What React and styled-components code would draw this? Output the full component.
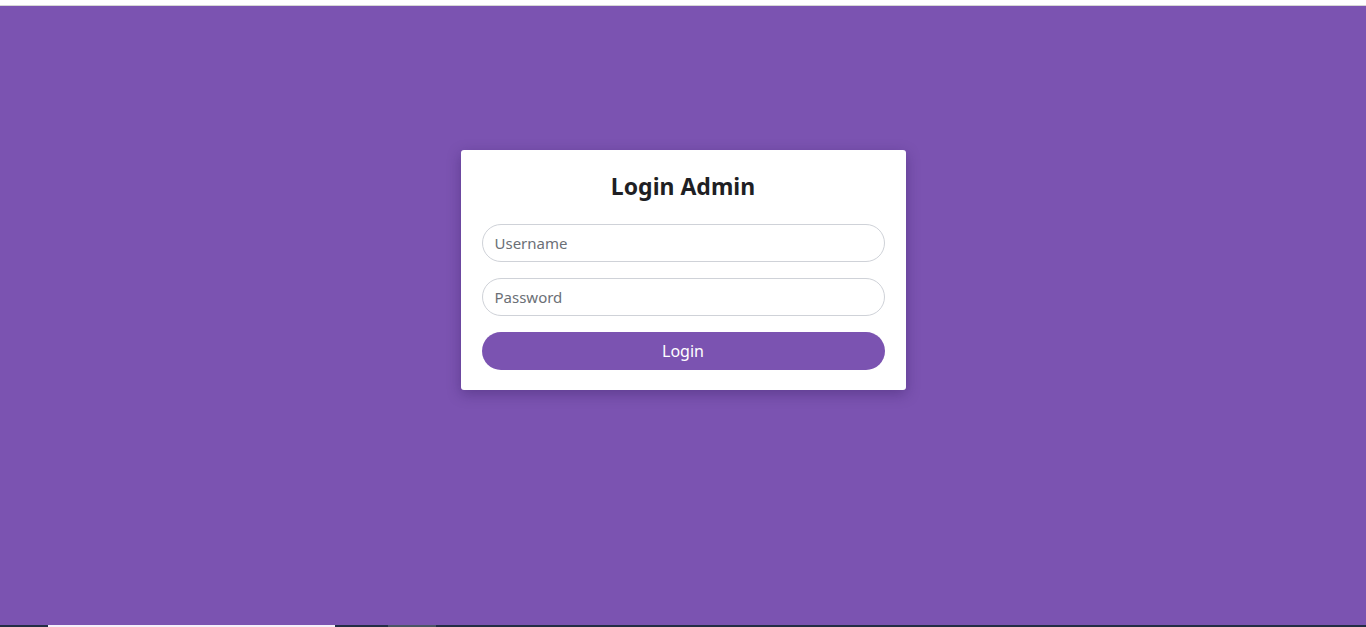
import React from "react";
import styled, { createGlobalStyle } from "styled-components";

const GlobalStyle = createGlobalStyle`
  html, body { margin: 0; padding: 0; }
  body { font-family: "Noto Sans", "Open Sans", sans-serif; background: #fff; }
  * { box-sizing: border-box; }
`;

const Page = styled.div`
  height: 627px;
  display: flex;
  flex-direction: column;
  overflow: hidden;
`;

const TopStrip = styled.div`
  height: 6px;
  background: #ffffff;
  border-bottom: 1px solid #d6d6d6;
`;

const Main = styled.main`
  flex: 1;
  background: #7b53b1;
  display: flex;
  justify-content: center;
  align-items: flex-start;
  padding-top: 144px;
`;

const Card = styled.form`
  width: 445px;
  background: #ffffff;
  border-radius: 3px;
  padding: 20px 21px;
  display: flex;
  flex-direction: column;
  box-shadow: 0 4px 14px rgba(40, 20, 80, 0.35);
`;

const Title = styled.h2`
  margin: 0 0 22px;
  font-size: 23px;
  line-height: 32px;
  font-weight: 700;
  color: #1f1f24;
  text-align: center;
`;

const Input = styled.input`
  height: 38px;
  width: 100%;
  border: 1px solid #cfd2d8;
  border-radius: 19px;
  padding: 0 12px;
  font-family: inherit;
  font-size: 15px;
  color: #333;
  margin-bottom: 16px;
  outline: none;
  &::placeholder { color: #6b6f76; }
`;

const Button = styled.button`
  height: 38px;
  width: 100%;
  border: none;
  border-radius: 19px;
  background: #7b53b1;
  color: #ffffff;
  font-family: inherit;
  font-size: 16px;
  cursor: pointer;
`;

const Taskbar = styled.div`
  height: 2px;
  background: #232d45;
  display: flex;
`;

const TaskSegment = styled.span`
  display: block;
  margin-left: ${(p) => p.$offset}px;
  width: ${(p) => p.$width}px;
  background: ${(p) => p.$color};
`;

export default function App() {
  return (
    <Page>
      <GlobalStyle />
      <TopStrip />
      <Main>
        <Card onSubmit={(e) => e.preventDefault()}>
          <Title>Login Admin</Title>
          <Input type="text" placeholder="Username" />
          <Input type="password" placeholder="Password" />
          <Button type="submit">Login</Button>
        </Card>
      </Main>
      <Taskbar>
        <TaskSegment $offset={48} $width={287} $color="#f4f0fa" />
        <TaskSegment $offset={53} $width={48} $color="#4a5566" />
      </Taskbar>
    </Page>
  );
}
